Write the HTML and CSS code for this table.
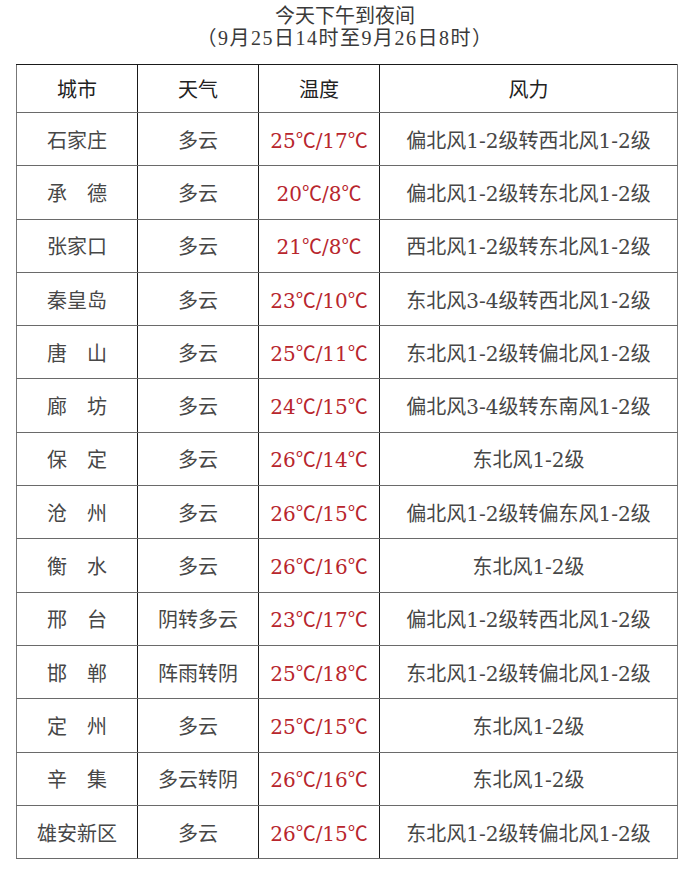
FILE: index.html
```html
<!DOCTYPE html>
<html lang="zh">
<head>
<meta charset="utf-8">
<link rel="stylesheet" href="styles.css">
</head>
<body>
<div class="page">
  <div class="title">
    <div class="title-line">今天下午到夜间</div>
    <div class="title-line title-sub">（9月25日14时至9月26日8时）</div>
  </div>
  <table class="forecast">
    <colgroup>
      <col class="c-city"><col class="c-weather"><col class="c-temp"><col class="c-wind">
    </colgroup>
    <thead>
      <tr><th>城市</th><th>天气</th><th>温度</th><th>风力</th></tr>
    </thead>
    <tbody>
      <tr><td>石家庄</td><td>多云</td><td class="temp">25<span class="deg">℃</span>/17<span class="deg">℃</span></td><td class="wind">偏北风1-2级转西北风1-2级</td></tr>
      <tr><td>承　德</td><td>多云</td><td class="temp">20<span class="deg">℃</span>/8<span class="deg">℃</span></td><td class="wind">偏北风1-2级转东北风1-2级</td></tr>
      <tr><td>张家口</td><td>多云</td><td class="temp">21<span class="deg">℃</span>/8<span class="deg">℃</span></td><td class="wind">西北风1-2级转东北风1-2级</td></tr>
      <tr><td>秦皇岛</td><td>多云</td><td class="temp">23<span class="deg">℃</span>/10<span class="deg">℃</span></td><td class="wind">东北风3-4级转西北风1-2级</td></tr>
      <tr><td>唐　山</td><td>多云</td><td class="temp">25<span class="deg">℃</span>/11<span class="deg">℃</span></td><td class="wind">东北风1-2级转偏北风1-2级</td></tr>
      <tr><td>廊　坊</td><td>多云</td><td class="temp">24<span class="deg">℃</span>/15<span class="deg">℃</span></td><td class="wind">偏北风3-4级转东南风1-2级</td></tr>
      <tr><td>保　定</td><td>多云</td><td class="temp">26<span class="deg">℃</span>/14<span class="deg">℃</span></td><td class="wind">东北风1-2级</td></tr>
      <tr><td>沧　州</td><td>多云</td><td class="temp">26<span class="deg">℃</span>/15<span class="deg">℃</span></td><td class="wind">偏北风1-2级转偏东风1-2级</td></tr>
      <tr><td>衡　水</td><td>多云</td><td class="temp">26<span class="deg">℃</span>/16<span class="deg">℃</span></td><td class="wind">东北风1-2级</td></tr>
      <tr><td>邢　台</td><td>阴转多云</td><td class="temp">23<span class="deg">℃</span>/17<span class="deg">℃</span></td><td class="wind">偏北风1-2级转西北风1-2级</td></tr>
      <tr><td>邯　郸</td><td>阵雨转阴</td><td class="temp">25<span class="deg">℃</span>/18<span class="deg">℃</span></td><td class="wind">东北风1-2级转偏北风1-2级</td></tr>
      <tr><td>定　州</td><td>多云</td><td class="temp">25<span class="deg">℃</span>/15<span class="deg">℃</span></td><td class="wind">东北风1-2级</td></tr>
      <tr><td>辛　集</td><td>多云转阴</td><td class="temp">26<span class="deg">℃</span>/16<span class="deg">℃</span></td><td class="wind">东北风1-2级</td></tr>
      <tr><td>雄安新区</td><td>多云</td><td class="temp">26<span class="deg">℃</span>/15<span class="deg">℃</span></td><td class="wind">东北风1-2级转偏北风1-2级</td></tr>
    </tbody>
  </table>
</div>
</body>
</html>
```
FILE: styles.css
```css
html, body {
  margin: 0;
  padding: 0;
  background: #ffffff;
}

body {
  font-family: "Liberation Serif", "Noto Sans CJK SC", serif;
  color: #474747;
}

.page {
  width: 690px;
  height: 892px;
  overflow: hidden;
}

.title {
  padding-top: 5px;
  text-align: center;
  color: #3a3a3a;
  font-size: 20px;
  line-height: 22px;
  height: 59px;
  box-sizing: border-box;
  height: 64px;
}

.title-sub {
  letter-spacing: 1.5px;
}

.forecast {
  margin-left: 16px;
  width: 661px;
  border-collapse: collapse;
  table-layout: fixed;
}

.c-city { width: 121px; }
.c-weather { width: 121px; }
.c-temp { width: 121px; }
.c-wind { width: 298px; }

.forecast th,
.forecast td {
  border: 1px solid #6a6a6a;
  border-left-color: #1a1a1a;
  border-right-color: #1a1a1a;
  text-align: center;
  padding: 0;
  font-size: 20px;
  font-weight: normal;
  white-space: nowrap;
}

.forecast th {
  height: 47px;
  color: #222222;
}

.forecast thead tr th {
  border-top-color: #1a1a1a;
}

.forecast td {
  height: 52.3px;
}

.forecast tr td:first-child,
.forecast tr th:first-child {
  border-left-color: #777777;
}

.forecast tr td:last-child,
.forecast tr th:last-child {
  border-right-color: #777777;
}

.temp,
.wind {
  font-family: "DejaVu Serif", "Noto Sans CJK SC", serif;
}

.temp {
  color: #b8262d;
}

.deg {
  font-family: "Noto Sans CJK SC", sans-serif;
}
```
